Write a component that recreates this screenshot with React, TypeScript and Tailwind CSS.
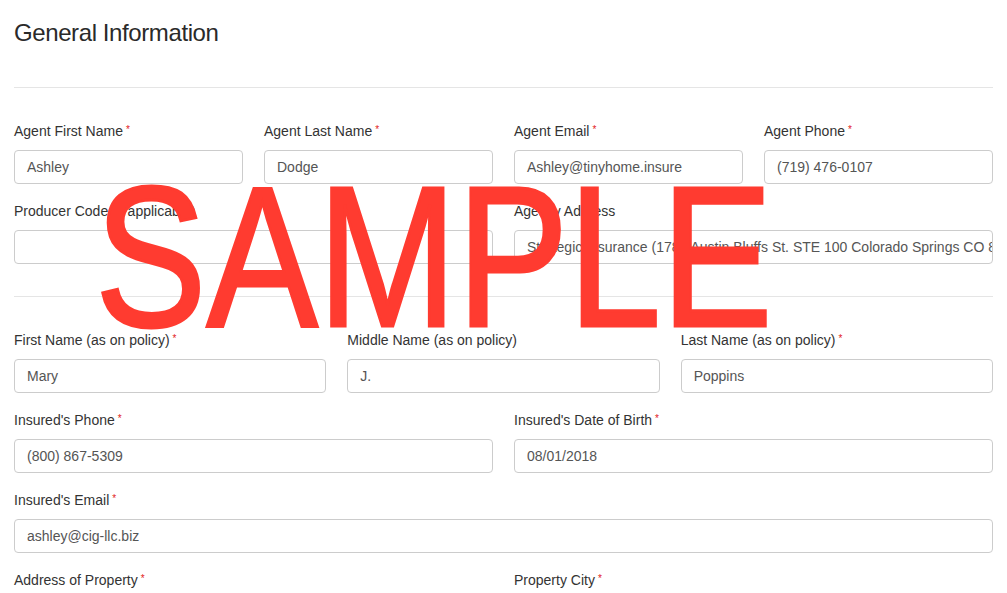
import React from 'react'

interface FieldProps {
  label: string
  value?: string
  required?: boolean
}

function Field({ label, value = '', required }: FieldProps) {
  return (
    <div className="mb-[17px] min-w-0">
      <label className="block h-[20px] leading-[20px] text-[14px] text-[#333] mb-[9px] whitespace-nowrap">
        {label}
        {required && <span className="relative -top-[3px] ml-[3px] text-[10px] text-[#e21b1b]">*</span>}
      </label>
      <div className="h-[34px] rounded-[4px] border border-[#cccccc] bg-white px-[12px] flex items-center text-[14px] text-[#555] overflow-hidden whitespace-nowrap">
        {value}
      </div>
    </div>
  )
}

export default function App() {
  return (
    <div
      className="relative min-h-[593px] bg-white px-[14px] pt-[19px] overflow-hidden"
      style={{ fontFamily: '"Liberation Sans", Arial, sans-serif' }}
    >
      <h2 className="text-[24px] leading-[28px] tracking-[-0.4px] text-[#2a2a2a]">General Information</h2>
      <hr className="mt-[40px] border-0 border-t border-[#e5e5e5]" />

      <div className="mt-[33px] grid grid-cols-4 gap-x-[21px]">
        <Field label="Agent First Name" value="Ashley" required />
        <Field label="Agent Last Name" value="Dodge" required />
        <Field label="Agent Email" value="Ashley@tinyhome.insure" required />
        <Field label="Agent Phone" value="(719) 476-0107" required />
      </div>
      <div className="grid grid-cols-2 gap-x-[21px]">
        <Field label="Producer Code (if applicable)" />
        <Field label="Agency Address" value="Strategic Insurance (1785 Austin Bluffs St. STE 100 Colorado Springs CO 80905)" />
      </div>

      <hr className="mt-[15px] border-0 border-t border-[#e5e5e5]" />

      <div className="mt-[33px] grid grid-cols-3 gap-x-[21px]">
        <Field label="First Name (as on policy)" value="Mary" required />
        <Field label="Middle Name (as on policy)" value="J." />
        <Field label="Last Name (as on policy)" value="Poppins" required />
      </div>
      <div className="grid grid-cols-2 gap-x-[21px]">
        <Field label="Insured's Phone" value="(800) 867-5309" required />
        <Field label="Insured's Date of Birth" value="08/01/2018" required />
      </div>
      <Field label="Insured's Email" value="ashley@cig-llc.biz" required />
      <div className="grid grid-cols-2 gap-x-[21px]">
        <Field label="Address of Property" required />
        <Field label="Property City" required />
      </div>

      {/* watermark */}
      <div className="pointer-events-none absolute left-[95px] top-[157px] origin-left scale-x-[0.835] text-[200px] leading-none text-[#ff3b30] [-webkit-text-stroke:3px_#ff3b30] whitespace-nowrap">
        SAMPLE
      </div>
    </div>
  )
}
